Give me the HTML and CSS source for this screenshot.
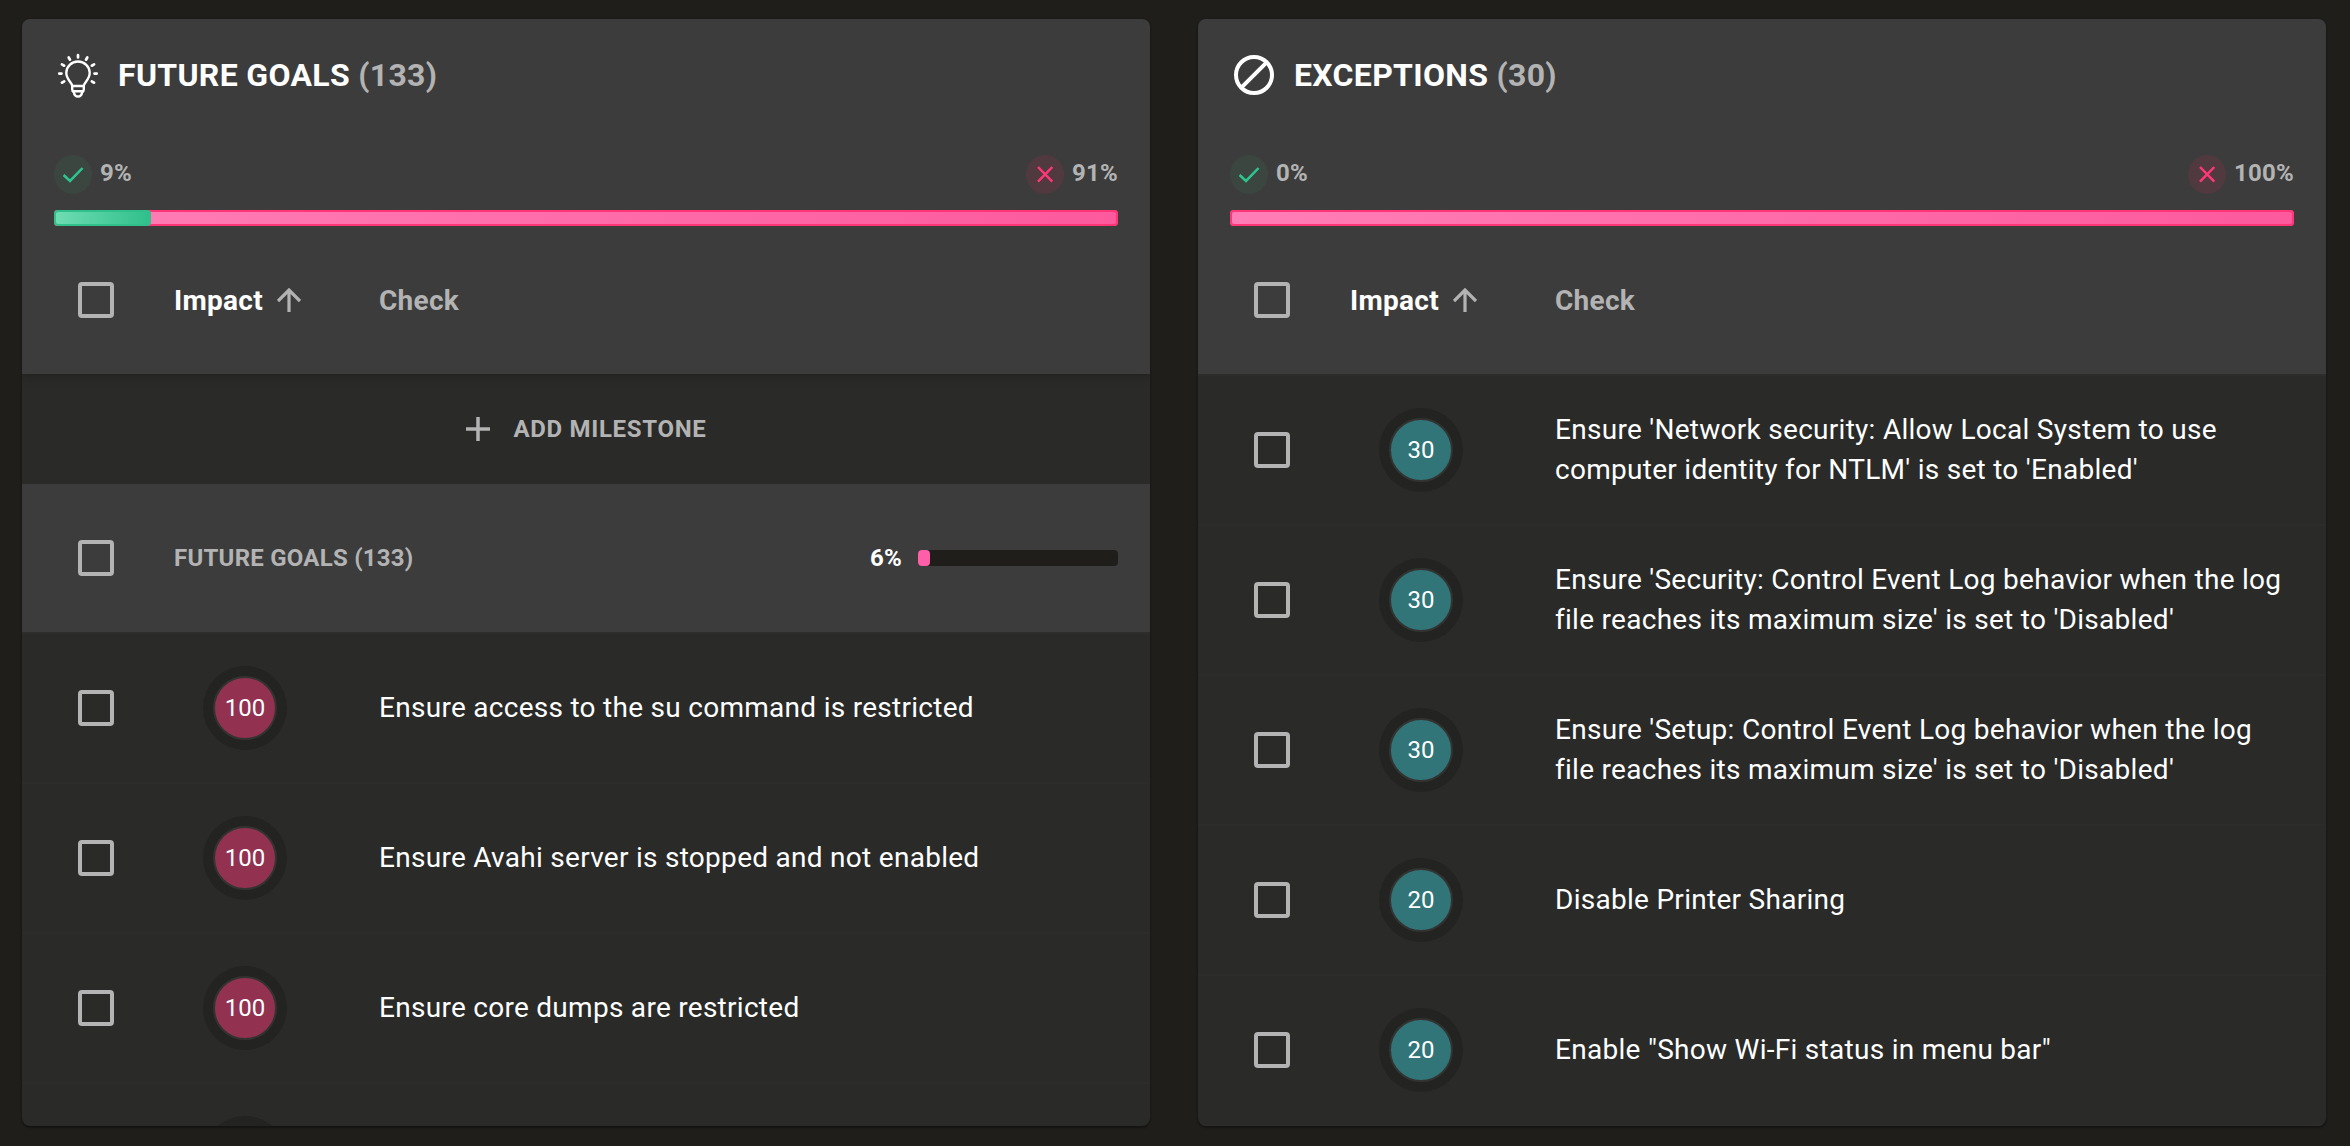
FILE: index.html
```html
<!DOCTYPE html>
<html lang="en">
<head>
<meta charset="utf-8">
<title>Checks</title>
<link rel="stylesheet" href="styles.css">
</head>
<body>
<svg class="sprite" width="0" height="0">
  <symbol id="check" viewBox="0 0 38 39"><path d="M9.6 20 16 25.9 28.6 13"/></symbol>
  <symbol id="cross" viewBox="0 0 38 39"><path d="M12 12 26.3 26.6M26.3 12 12 26.6"/></symbol>
  <symbol id="arrow" viewBox="0 0 24 24"><path d="M12 24V2M1 13 12 2 23 13"/></symbol>
</svg>
<main class="board">
  <section class="panel">
    <header class="panel-head raised">
      <h2 class="title">
        <svg class="title-icon" viewBox="0 0 48 48">
          <g class="bulb">
            <path d="M18.2 38v-3c0-3.4-5.9-6.300-5.900-13.200a11.700 11.300 0 0 1 23.400 0c0 6.900-5.900 9.800-5.900 13.200v3.500c0 1.500-.8 2-1.600 2.300-.4 3-2 4.700-4.200 4.700s-3.800-1.700-4.200-4.700c-.8-.3-1.600-.8-1.600-2.300z"/>
            <path d="M18.200 35h11.600M19 40.300h10"/>
            <path class="rays" d="M24 4v2.400M14.700 6.500l1.300 2.200M33.300 6.500 32 8.700M7.900 13.400l2.300 1.300M40.100 13.400l-2.300 1.300M5.200 22.600h2.300M42.800 22.600h-2.300M7.900 31.700l2.300-1.300M40.100 31.700l-2.300-1.300"/>
          </g>
        </svg>
        <span>FUTURE GOALS <span class="count">(133)</span></span>
      </h2>
      <div class="rates">
        <span class="rate pass"><svg class="badge"><use href="#check"/></svg>9%</span>
        <span class="rate fail"><svg class="badge"><use href="#cross"/></svg>91%</span>
      </div>
      <div class="bar"><div class="bar-pass" style="width:9.12%"></div></div>
      <div class="columns">
        <span class="box"></span>
        <span class="sort">Impact <svg class="arrow"><use href="#arrow"/></svg></span>
        <span class="col-name">Check</span>
      </div>
    </header>
    <button class="add"><svg class="plus" viewBox="0 0 24 24"><path d="M12 0v24M0 12h24"/></svg>ADD MILESTONE</button>
    <div class="milestone">
      <span class="box"></span>
      <span class="milestone-name">FUTURE GOALS (133)</span>
      <span class="milestone-rate">6%</span>
      <div class="meter"><div class="meter-fill" style="width:6%"></div></div>
    </div>
    <div class="row"><span class="box"></span><span class="impact high">100</span><p class="text">Ensure access to the su command is restricted</p></div>
    <div class="row"><span class="box"></span><span class="impact high">100</span><p class="text">Ensure Avahi server is stopped and not enabled</p></div>
    <div class="row"><span class="box"></span><span class="impact high">100</span><p class="text">Ensure core dumps are restricted</p></div>
    <div class="row"><span class="box"></span><span class="impact high"></span></div>
  </section>

  <section class="panel">
    <header class="panel-head">
      <h2 class="title">
        <svg class="title-icon" viewBox="0 0 48 48"><g class="ban"><circle cx="24" cy="24" r="18"/><path d="M11.600 36.400 36.400 11.600"/></g></svg>
        <span>EXCEPTIONS <span class="count">(30)</span></span>
      </h2>
      <div class="rates">
        <span class="rate pass"><svg class="badge"><use href="#check"/></svg>0%</span>
        <span class="rate fail"><svg class="badge"><use href="#cross"/></svg>100%</span>
      </div>
      <div class="bar"></div>
      <div class="columns">
        <span class="box"></span>
        <span class="sort">Impact <svg class="arrow"><use href="#arrow"/></svg></span>
        <span class="col-name">Check</span>
      </div>
    </header>
    <div class="row first"><span class="box"></span><span class="impact low">30</span><p class="text">Ensure 'Network security: Allow Local System to use computer identity for NTLM' is set to 'Enabled'</p></div>
    <div class="row"><span class="box"></span><span class="impact low">30</span><p class="text">Ensure 'Security: Control Event Log behavior when the log file reaches its maximum size' is set to 'Disabled'</p></div>
    <div class="row"><span class="box"></span><span class="impact low">30</span><p class="text">Ensure 'Setup: Control Event Log behavior when the log file reaches its maximum size' is set to 'Disabled'</p></div>
    <div class="row"><span class="box"></span><span class="impact low">20</span><p class="text">Disable Printer Sharing</p></div>
    <div class="row"><span class="box"></span><span class="impact low">20</span><p class="text">Enable "Show Wi-Fi status in menu bar"</p></div>
  </section>
</main>
</body>
</html>
```
FILE: styles.css
```css
* { box-sizing: border-box; }
body {
  margin: 0;
  height: 1146px;
  overflow: hidden;
  background: #1f1e1b;
  color: #fff;
  font-family: Roboto, sans-serif;
}
.sprite { display: block; }
svg { fill: none; flex: none; }

.board {
  display: grid;
  grid-template-columns: 1128px 1128px;
  gap: 48px;
  padding: 19px 22px 0;
}
.panel {
  height: 1107px;
  overflow: hidden;
  border-radius: 8px;
  background: #2a2a28;
  box-shadow: 0 2px 2px rgba(0, 0, 0, .3), 0 0 2px rgba(0, 0, 0, .25);
}
.panel-head {
  position: relative;
  height: 355px;
  background: #3c3c3c;
}
.raised { box-shadow: 0 2px 8px 1px rgba(0, 0, 0, .2); }

.title {
  display: flex;
  align-items: center;
  gap: 16px;
  height: 112px;
  margin: 0;
  padding-left: 32px;
  font-size: 32px;
  font-weight: 700;
  letter-spacing: .01em;
}
.title-icon { width: 48px; height: 48px; stroke: #fff; }
.bulb { stroke-width: 2.400; stroke-linecap: round; }
.rays { stroke-width: 2.700; }
.ban { stroke-width: 4; }
.count { color: #b3b3b3; }

.rates {
  display: flex;
  justify-content: space-between;
  height: 79px;
  padding: 24px 32px 0;
}
.rate {
  display: flex;
  gap: 8px;
  height: 39px;
  color: #b3b3b3;
  font-size: 24px;
  font-weight: 700;
  letter-spacing: .01em;
  line-height: 36px;
}
.badge {
  width: 38px;
  height: 39px;
  border-radius: 50%;
  stroke-width: 2.500;
}
.pass .badge { background: #3c4640; stroke: #2ec68f; }
.fail .badge { background: #503a40; stroke: #ff3778; }

.bar {
  height: 16px;
  margin: 0 32px;
  border-radius: 4px;
  background: linear-gradient(90deg, #ff7eb5, #fc5a9d);
  box-shadow: inset 0 0 0 2px #ff3577;
}
.bar-pass {
  height: 16px;
  border: 2px solid #30c08b;
  border-radius: 4px;
  background: linear-gradient(90deg, #6fdcb2, #30c08b);
}

.columns, .row, .milestone {
  display: grid;
  grid-template-columns: 152px 205px 1fr;
  align-items: center;
  height: 148px;
}
.columns {
  font-size: 28px;
  font-weight: 700;
  letter-spacing: .01em;
}
.sort { display: flex; align-items: center; gap: 14px; }
.arrow { width: 24px; height: 24px; stroke: #b3b3b3; stroke-width: 3.200; }
.col-name { color: #b3b3b3; }
.box {
  width: 36px;
  height: 36px;
  margin-left: 56px;
  border: 4px solid #b3b3b3;
  border-radius: 4px;
}

.add {
  display: flex;
  align-items: center;
  justify-content: center;
  gap: 24px;
  width: 100%;
  height: 110px;
  padding: 0;
  border: 0;
  background: none;
  color: #b3b3b3;
  font: 700 24px Roboto, sans-serif;
  letter-spacing: .68px;
}
.plus { width: 24px; height: 24px; stroke: #b3b3b3; stroke-width: 3.500; }

.milestone {
  grid-template-columns: 152px 1fr auto 200px;
  height: 150px;
  padding-right: 32px;
  border-bottom: 2px solid #2d2d2b;
  background: #3c3c3c;
  background-clip: padding-box;
  font-size: 24px;
  font-weight: 700;
  letter-spacing: .01em;
}
.milestone-name { color: #b3b3b3; }
.milestone-rate { margin-right: 16px; }
.meter {
  height: 16px;
  border-radius: 4px;
  background: #1f1e1b;
}
.meter-fill {
  height: 16px;
  border-radius: 4px;
  background: #ff5fa8;
}

.row {
  height: 150px;
  padding-right: 32px;
  border-bottom: 2px solid #2c2c2a;
}
.row.first { height: 152px; border-top: 2px solid #2d2d2b; }
.impact {
  width: 64px;
  height: 64px;
  margin-left: 39px;
  border: 2px solid #333331;
  border-radius: 50%;
  box-shadow: 0 0 0 10px #232321;
  font-size: 24px;
  line-height: 60px;
  text-align: center;
}
.high { background: #923250; }
.low { background: #317578; }
.text {
  margin: 0;
  font-size: 28px;
  line-height: 40px;
  letter-spacing: .01em;
}
```
